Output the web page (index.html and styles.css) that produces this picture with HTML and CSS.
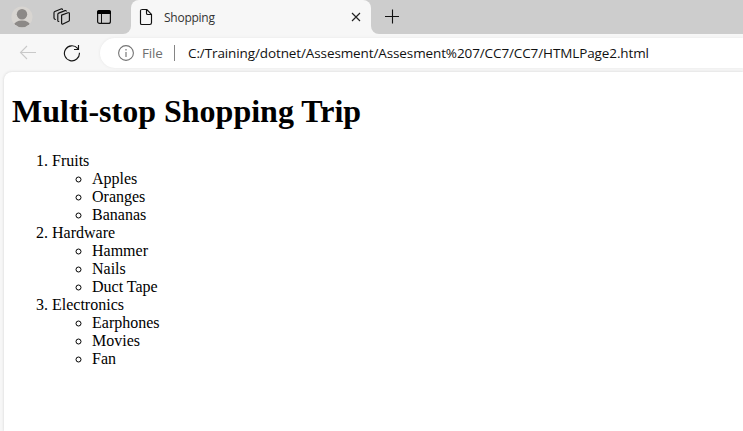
FILE: index.html
```html
<!DOCTYPE html>
<html lang="en">
<head>
<meta charset="utf-8">
<title>Shopping</title>
<link rel="stylesheet" href="styles.css">
</head>
<body>
<header class="tabbar">
  <div class="tools">
    <svg class="avatar" width="22" height="22" viewBox="0 0 22 22"><defs><clipPath id="face"><circle cx="11" cy="11" r="10.3"/></clipPath></defs><circle cx="11" cy="11" r="10.6" fill="#d8d5d1"/><g clip-path="url(#face)" fill="#8c8987"><circle cx="11" cy="8.2" r="5.2"/><ellipse cx="11" cy="19.3" rx="8.2" ry="4.8"/></g></svg>
    <svg class="spaces" width="18" height="18" viewBox="0 0 18 18" fill="none" stroke="#111" stroke-width="1.15" stroke-linejoin="round" stroke-linecap="round"><path d="M8.6 7.1 15 4.8Q16.4 4.4 16.4 5.6V12.2Q16.4 13 15.6 13.3L10 16Q8.6 16.5 8.6 15.2ZM5.8 13.5Q4.8 13.5 4.8 12.4V6.4Q4.8 5.5 5.7 5.1L12 2.6Q13 2.2 13.2 3.2M2.4 11.5Q1 11.2 1 10V4.7Q1 3.9 1.8 3.5L8 1Q9.2.6 9.5 1.5"/></svg>
    <svg class="vertical" width="16" height="16" viewBox="0 0 16 16"><rect x="1.6" y="1.6" width="12.8" height="12.8" rx="2" fill="none" stroke="#111" stroke-width="1.2"/><path d="M1 5V3Q1 1 3 1H13Q15 1 15 3V5Z" fill="#000"/><path d="M5.5 5V14" stroke="#111"/></svg>
  </div>
  <div class="tabwrap"><div class="tab">
    <svg class="page-icon" width="14" height="18" viewBox="0 0 14 18" fill="none" stroke="#111" stroke-width="1.15" stroke-linejoin="round"><path d="M2.5 1.5H7.7L12.5 6.3V14.8Q12.5 16.5 10.8 16.5H2.7Q1.5 16.5 1.5 15.2V2.7Q1.5 1.5 2.7 1.5M7.5 1.5V5.2Q7.5 6.5 8.8 6.5H12.5"/></svg>
    <span class="tab-title">Shopping</span>
    <svg class="close" width="10" height="10" viewBox="0 0 10 10" stroke="#222" stroke-width="1.15"><path d="M1 1 9 9M9 1 1 9"/></svg>
  </div></div>
  <div class="rest"><svg width="16" height="16" viewBox="0 0 16 16" stroke="#111" stroke-width="1.1"><path d="M1 7.5H15M8.5 .5V14.5"/></svg></div>
</header>
<nav class="toolbar">
  <svg class="back" width="18" height="16" viewBox="0 0 18 16" fill="none" stroke="#c9c9c9" stroke-width="1.1"><path d="M8 1 1.5 7.5 8 14M1.5 7.5H17"/></svg>
  <svg class="reload" width="18" height="18" viewBox="0 0 18 18" fill="none" stroke="#161616" stroke-width="1.15"><path d="M16.4 8.8A7.5 7.5 0 1 1 14.6 4.4L15.5 5.4M15.5 1V5.5H11"/></svg>
  <div class="address">
    <svg class="info" width="16" height="16" viewBox="0 0 16 16"><circle cx="8" cy="8" r="7.4" fill="none" stroke="#737373" stroke-width="1.1"/><path d="M8 7V12M8 4V5.4" stroke="#858585" stroke-width="1.3"/></svg>
    <span class="scheme">File</span>
    <span class="divider"></span>
    <span class="url">C:/Training/dotnet/Assesment/Assesment%207/CC7/CC7/HTMLPage2.html</span>
  </div>
</nav>
<main class="document">
  <h1>Multi-stop Shopping Trip</h1>
  <ol>
    <li>Fruits<ul><li>Apples</li><li>Oranges</li><li>Bananas</li></ul></li>
    <li>Hardware<ul><li>Hammer</li><li>Nails</li><li>Duct Tape</li></ul></li>
    <li>Electronics<ul><li>Earphones</li><li>Movies</li><li>Fan</li></ul></li>
  </ol>
</main>
</body>
</html>
```
FILE: styles.css
```css
* { box-sizing: border-box; }
body {
  margin: 0;
  height: 431px;
  overflow: hidden;
  display: flex;
  flex-direction: column;
  background: #f7f7f7;
  font-family: "Open Sans", "Noto Sans", sans-serif;
}
svg { display: block; flex: none; }
.tabbar { display: flex; height: 34px; flex: none; }
.tools {
  width: 131px;
  display: flex;
  align-items: center;
  padding-left: 11px;
  background: #cdcdcd;
  border-bottom-right-radius: 8px;
}
.spaces { margin-left: 20px; }
.vertical { margin-left: 25px; }
.tabwrap {
  width: 240px;
  background: linear-gradient(#cdcdcd 50%, #f7f7f7 50%);
}
.tab {
  height: 34px;
  display: flex;
  align-items: center;
  padding: 0 10px 0 8px;
  background: #f7f7f7;
  border-radius: 8px 8px 0 0;
}
.tab-title { margin-left: 11px; font-size: 12px; color: #333; letter-spacing: -0.25px; }
.close { margin-left: auto; }
.rest {
  flex: 1;
  display: flex;
  align-items: center;
  padding-left: 13px;
  background: #cdcdcd;
  border-bottom-left-radius: 8px;
}
.toolbar { height: 38px; flex: none; display: flex; align-items: center; padding-left: 19px; }
.reload { margin-left: 26px; }
.address {
  flex: 1;
  height: 30px;
  margin-left: 19px;
  padding-left: 18px;
  display: flex;
  align-items: center;
  background: #fff;
  border-radius: 15px 0 0 15px;
  box-shadow: 0 0 3px #e6e6e6;
}
.scheme { width: 32px; margin-left: 8px; font-size: 13.5px; color: #6f6f6f; letter-spacing: -0.2px; }
.divider { width: 1px; height: 16px; background: #858585; }
.url { margin-left: 13px; font-size: 13.5px; color: #111; white-space: nowrap; letter-spacing: -0.11px; }
.document {
  flex: 1;
  margin-left: 4px;
  padding: 0 8px;
  background: #fff;
  border-top-left-radius: 8px;
  box-shadow: 0 0 3px #d2d2d2;
  font: 16px "Liberation Serif", serif;
  color: #000;
  overflow: hidden;
}
.document h1 { font-size: 32px; margin: 21.44px 0; }
.document ol { margin: 0; padding-left: 40px; }
.document ul { margin: 0; padding-left: 40px; }
.document li { line-height: 18px; }
```
